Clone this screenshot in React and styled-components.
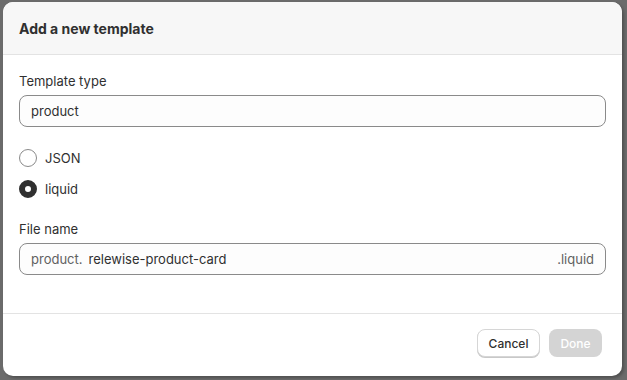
import React from "react";
import styled, { createGlobalStyle } from "styled-components";

const Global = createGlobalStyle`
  html, body { margin: 0; padding: 0; background: #6b6b6b; }
  body { font-family: Inter, "Noto Sans", sans-serif; color: #303030; }
  * { box-sizing: border-box; }
`;

const Page = styled.div`
  width: 627px;
  height: 380px;
  padding: 2px 5px 4px 3px;
`;

const Modal = styled.div`
  width: 619px;
  height: 374px;
  background: #fff;
  border-radius: 10px;
  overflow: hidden;
  display: flex;
  flex-direction: column;
  box-shadow: 2px 2px 3px rgba(0,0,0,0.25);
`;

const Header = styled.div`
  height: 53px;
  background: #f7f7f7;
  border-bottom: 1px solid #e3e3e3;
  display: flex;
  align-items: center;
  padding: 0 16px;
  font-size: 14px;
  font-weight: 650;
  color: #303030;
`;

const Body = styled.div`
  flex: 1;
  padding: 16px 16px 0 16px;
  display: flex;
  flex-direction: column;
  border-bottom: 1px solid #e3e3e3;
`;

const Label = styled.div`
  font-size: 13px;
  line-height: 20px;
  color: #303030;
  margin-bottom: 4px;
`;

const Field = styled.div`
  height: 32px;
  border: 1px solid #8a8a8a;
  border-radius: 8px;
  background: #fdfdfd;
  display: flex;
  align-items: center;
  padding: 0 11px;
  font-size: 13px;
  color: #303030;
`;

const Prefix = styled.span`
  color: #616161;
  margin-right: 6px;
`;

const Suffix = styled.span`
  color: #616161;
  margin-left: auto;
`;

const RadioGroup = styled.div`
  display: flex;
  flex-direction: column;
  gap: 11px;
  margin: 21px 0 20px;
`;

const RadioRow = styled.label`
  display: flex;
  align-items: center;
  gap: 8px;
  font-size: 13px;
  line-height: 20px;
  color: #303030;
`;

const RadioCircle = styled.span`
  width: 18px;
  height: 18px;
  border-radius: 50%;
  background: #fff;
  border: ${(p) => (p.$checked ? "6px solid #303030" : "1px solid #8a8a8a")};
  flex: none;
`;

const Footer = styled.div`
  height: 62px;
  display: flex;
  align-items: center;
  justify-content: flex-end;
  gap: 9px;
  padding: 0 20px 4px 0;
`;

const Button = styled.button`
  height: 28px;
  width: ${(p) => (p.$disabled ? "53px" : "63px")};
  padding: 0;
  border-radius: 8px;
  font-family: inherit;
  font-size: 12px;
  font-weight: 550;
  border: ${(p) => (p.$disabled ? "none" : "1px solid #d6d6d6")};
  background: ${(p) => (p.$disabled ? "#d4d4d4" : "#fff")};
  color: ${(p) => (p.$disabled ? "#ffffff" : "#303030")};
  box-shadow: ${(p) => (p.$disabled ? "none" : "0 1px 0 #c8c8c8")};
`;

export default function App() {
  return (
    <>
      <Global />
      <Page>
        <Modal>
          <Header>Add a new template</Header>
          <Body>
            <Label>Template type</Label>
            <Field>product</Field>
            <RadioGroup>
              <RadioRow>
                <RadioCircle />
                JSON
              </RadioRow>
              <RadioRow>
                <RadioCircle $checked />
                liquid
              </RadioRow>
            </RadioGroup>
            <Label>File name</Label>
            <Field>
              <Prefix>product.</Prefix>
              relewise-product-card
              <Suffix>.liquid</Suffix>
            </Field>
          </Body>
          <Footer>
            <Button>Cancel</Button>
            <Button $disabled>Done</Button>
          </Footer>
        </Modal>
      </Page>
    </>
  );
}
